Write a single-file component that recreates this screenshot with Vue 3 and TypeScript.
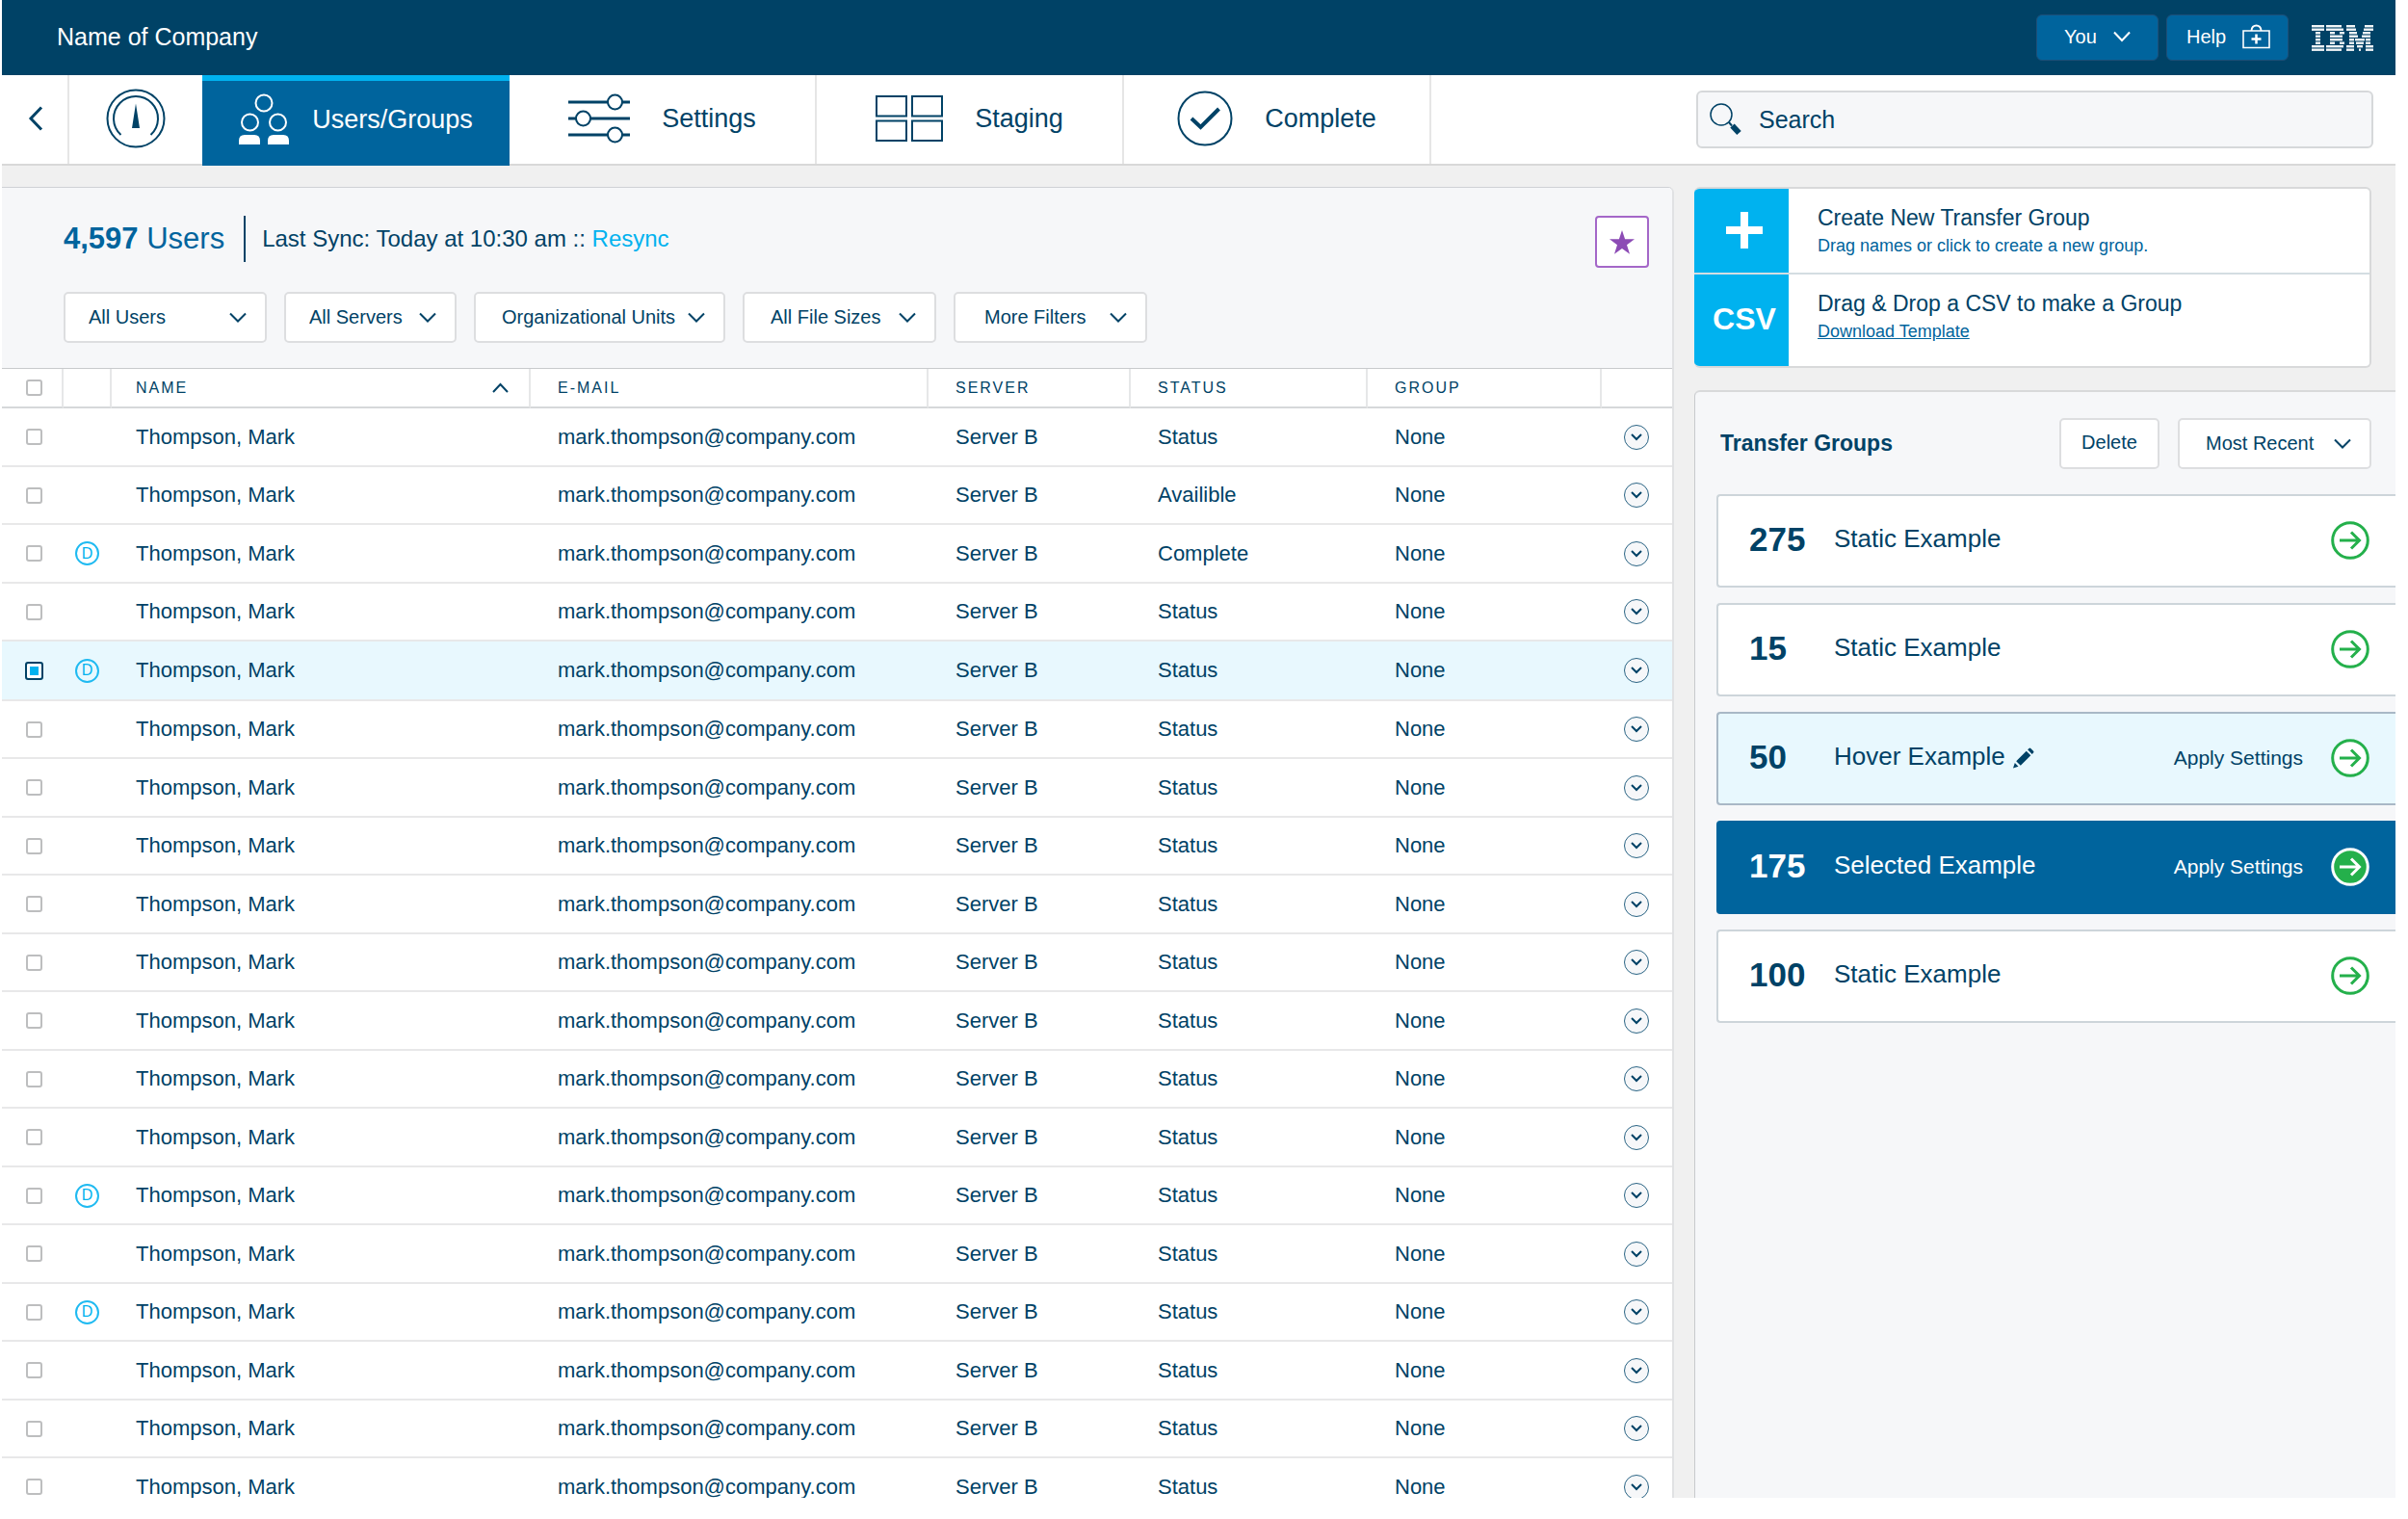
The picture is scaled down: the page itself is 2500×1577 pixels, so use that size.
<script setup lang="ts">
import { ref } from 'vue'

interface UserRow {
  id: number
  status: string
  delegate: boolean
  selected: boolean
}

interface Filter {
  label: string
  width: number
}

interface TransferGroup {
  count: number
  label: string
  state: 'static' | 'hover' | 'selected'
}

const delegates = [3, 5, 14, 16]
const statuses: Record<number, string> = { 2: 'Availible', 3: 'Complete' }

const rows = ref<UserRow[]>(
  Array.from({ length: 19 }, (_, i) => ({
    id: i + 1,
    status: statuses[i + 1] ?? 'Status',
    delegate: delegates.includes(i + 1),
    selected: i + 1 === 5,
  })),
)

const filters: Filter[] = [
  { label: 'All Users', width: 211 },
  { label: 'All Servers', width: 179 },
  { label: 'Organizational Units', width: 261 },
  { label: 'All File Sizes', width: 201 },
  { label: 'More Filters', width: 201 },
]

const groups: TransferGroup[] = [
  { count: 275, label: 'Static Example', state: 'static' },
  { count: 15, label: 'Static Example', state: 'static' },
  { count: 50, label: 'Hover Example', state: 'hover' },
  { count: 175, label: 'Selected Example', state: 'selected' },
  { count: 100, label: 'Static Example', state: 'static' },
]

const query = ref('')

/* Logo stripes: for each of the eight bars, [start, end] pairs along x. */
const logoBars: number[][][] = [
  [[0, 13], [15, 31], [36, 45], [55, 64]],
  [[0, 13], [15, 33], [36, 46], [54, 64]],
  [[4, 9], [19, 24], [29, 34], [39, 47], [53, 61]],
  [[4, 9], [19, 32], [39, 48], [52, 61]],
  [[4, 9], [19, 32], [39, 44], [45, 55], [56, 61]],
  [[4, 9], [19, 24], [29, 34], [39, 44], [46, 54], [56, 61]],
  [[0, 13], [15, 33], [36, 44], [47, 53], [56, 64]],
  [[0, 13], [15, 31], [36, 44], [49, 51], [56, 64]],
]
</script>

<template>
  <div class="app">
    <header class="topbar">
      <span class="company">Name of Company</span>
      <div class="topbar-actions">
        <button class="top-button" type="button">
          <span>You</span>
          <svg class="you-chevron" width="18" height="12" viewBox="0 0 18 12" fill="none" stroke="currentColor" stroke-width="2"><path d="M1 1.5l8 8.5 8-8.5" /></svg>
        </button>
        <button class="top-button" type="button">
          <span>Help</span>
          <svg class="help-icon" width="30" height="26" viewBox="0 0 30 26" fill="none" stroke="currentColor" stroke-width="1.6"><path d="M1 7h27v17.500H1z" /><path d="M9.500 7c0-7.500 10-7.500 10 0" stroke-width="2" /><path d="M14.500 10.500v10M9.500 15.500h10" stroke-width="2.500" /></svg>
        </button>
        <svg class="logo" width="64" height="27" viewBox="0 0 64 27" role="img" aria-label="IBM" fill="#f2f6f8">
          <g v-for="(bar, i) in logoBars" :key="i">
            <rect v-for="([from, to], j) in bar" :key="j" :x="from" :y="i * 3.5" :width="to - from" height="2.4" />
          </g>
        </svg>
      </div>
    </header>

    <div class="navbar">
      <nav class="tabs">
        <a class="tab tab-back" href="#back" aria-label="Back">
          <svg width="16" height="26" viewBox="0 0 16 26" fill="none" stroke="currentColor" stroke-width="3"><path d="M14 1.500L3 13l11 11.500" /></svg>
        </a>
        <a class="tab tab-gauge" href="#dashboard" aria-label="Dashboard">
          <svg width="62" height="62" viewBox="0 0 62 62" fill="none" stroke="currentColor" stroke-width="2"><circle cx="31" cy="31" r="29.500" /><path d="M15.500 48a23 23 0 1 1 31 0" /><path d="M31 15.500L35 41h-8z" fill="currentColor" stroke="none" /></svg>
        </a>
        <a class="tab tab-step tab-active" href="#users" aria-current="page">
          <svg width="52" height="54" viewBox="0 0 52 54" fill="none" stroke="currentColor" stroke-width="2"><circle cx="26" cy="10" r="8.500" /><circle cx="11.500" cy="30" r="8.500" /><circle cx="40.500" cy="30" r="8.500" /><path d="M0 53v-4q0-6 6-6h10q6 0 6 6v4zM30 53v-4q0-6 6-6h10q6 0 6 6v4z" fill="currentColor" stroke="none" /></svg>
          <span>Users/Groups</span>
        </a>
        <a class="tab tab-step tab-ruled" href="#settings">
          <svg width="64" height="52" viewBox="0 0 64 52" fill="none" stroke="currentColor" stroke-width="2"><g stroke-width="3"><path d="M0 9h41M56 9h8M0 26h8M23 26h41M0 43h41M56 43h8" /></g><circle cx="48.500" cy="9" r="7.500" /><circle cx="15.500" cy="26" r="7.500" /><circle cx="48.500" cy="43" r="7.500" /></svg>
          <span>Settings</span>
        </a>
        <a class="tab tab-step tab-ruled" href="#staging">
          <svg width="70" height="48" viewBox="0 0 70 48" fill="none" stroke="currentColor" stroke-width="2"><path d="M1 1h31v20.500H1zM38 1h31v20.500H38zM1 26.500h31V47H1zM38 26.500h31V47H38z" /></svg>
          <span>Staging</span>
        </a>
        <a class="tab tab-step tab-ruled" href="#complete">
          <svg width="58" height="58" viewBox="0 0 58 58" fill="none" stroke="currentColor" stroke-width="2"><circle cx="29" cy="29" r="27.500" /><path d="M15 29l9.500 9L43.500 19" stroke-width="4" /></svg>
          <span>Complete</span>
        </a>
      </nav>
      <label class="search">
        <svg width="34" height="34" viewBox="0 0 34 34" fill="none" stroke="currentColor"><circle cx="12" cy="12" r="11" stroke-width="1.500" /><path d="M20 20l3 3.500" stroke-width="2" /><path d="M23.500 23.500l7 7.500" stroke-width="6" /></svg>
        <input v-model="query" type="search" placeholder="Search" aria-label="Search">
      </label>
    </div>

    <div class="workspace">
      <main class="users">
        <div class="users-head">
          <div class="users-title">
            <h1><strong>4,597</strong> Users</h1>
            <p>Last Sync: Today at 10:30 am :: <a href="#resync">Resync</a></p>
            <button class="star" type="button" aria-label="Favorite">
              <svg width="26" height="25" viewBox="0 0 26 25" fill="currentColor"><path d="M13 0l3.100 9.300H26l-8 5.900 3 9.500-8-5.800-8 5.800 3-9.500-8-5.900h9.900z" /></svg>
            </button>
          </div>
          <div class="filters">
            <div v-for="filter in filters" :key="filter.label" class="picker" :style="{ width: filter.width + 'px' }">
              <select :aria-label="filter.label"><option>{{ filter.label }}</option></select>
              <svg width="18" height="12" viewBox="0 0 18 12" fill="none" stroke="currentColor" stroke-width="2"><path d="M1 1.500l8 8 8-8" /></svg>
            </div>
          </div>
        </div>

        <table class="grid">
          <colgroup>
            <col class="c-check"><col class="c-badge"><col><col class="c-mail"><col class="c-server"><col class="c-status"><col class="c-group"><col class="c-more">
          </colgroup>
          <thead>
            <tr>
              <th class="check"><input type="checkbox" aria-label="Select all users"></th>
              <th></th>
              <th class="name">
                <button class="sort" type="button">
                  <span>NAME</span>
                  <svg width="17" height="11" viewBox="0 0 17 11" fill="none" stroke="currentColor" stroke-width="2"><path d="M1 10l7.500-8L16 10" /></svg>
                </button>
              </th>
              <th>E-MAIL</th>
              <th>SERVER</th>
              <th>STATUS</th>
              <th>GROUP</th>
              <th></th>
            </tr>
          </thead>
          <tbody>
            <tr v-for="row in rows" :key="row.id" :class="{ picked: row.selected }">
              <td class="check"><input v-model="row.selected" type="checkbox" aria-label="Select Thompson, Mark"></td>
              <td class="badge-cell"><span v-if="row.delegate" class="badge">D</span></td>
              <td class="name">Thompson, Mark</td>
              <td>mark.thompson@company.com</td>
              <td>Server B</td>
              <td>{{ row.status }}</td>
              <td>None</td>
              <td class="more-cell">
                <button class="more" type="button" aria-label="Show details">
                  <svg width="12" height="8" viewBox="0 0 12 8" fill="none" stroke="currentColor" stroke-width="2"><path d="M1 1l5 5 5-5" /></svg>
                </button>
              </td>
            </tr>
          </tbody>
        </table>
      </main>

      <aside class="side">
        <section class="create">
          <div class="create-row">
            <button class="tile" type="button" aria-label="Create New Transfer Group">
              <svg width="38" height="38" viewBox="0 0 38 38" stroke="currentColor" stroke-width="8"><path d="M19 0v38M0 19h38" /></svg>
            </button>
            <div class="create-text">
              <h2>Create New Transfer Group</h2>
              <p>Drag names or click to create a new group.</p>
            </div>
          </div>
          <div class="create-row create-csv">
            <button class="tile" type="button">CSV</button>
            <div class="create-text">
              <h2>Drag &amp; Drop a CSV to make a Group</h2>
              <p><a href="#template">Download Template</a></p>
            </div>
          </div>
        </section>

        <section class="transfer">
          <div class="transfer-head">
            <h2>Transfer Groups</h2>
            <button class="delete" type="button">Delete</button>
            <div class="picker picker-sort">
              <select aria-label="Sort groups"><option>Most Recent</option></select>
              <svg width="18" height="12" viewBox="0 0 18 12" fill="none" stroke="currentColor" stroke-width="2"><path d="M1 1.500l8 8 8-8" /></svg>
            </div>
          </div>
          <ul class="groups">
            <li v-for="(group, i) in groups" :key="i" class="group" :class="group.state">
              <span class="count">{{ group.count }}</span>
              <span class="label">{{ group.label }}</span>
              <svg v-if="group.state === 'hover'" class="pencil" width="22" height="22" viewBox="0 0 24 24" fill="currentColor"><path d="M0 23.500l2-6 4 4zM3.500 15.500L15 4l5 5L8.500 20.500zM16.500 2.500L18 1q1-1 2 0l3 3q1 1 0 2l-1.500 1.500z" /></svg>
              <span class="spacer"></span>
              <button v-if="group.state !== 'static'" class="apply" type="button">Apply Settings</button>
              <button class="go" type="button" aria-label="Open group">
                <svg width="40" height="40" viewBox="0 0 40 40" fill="none" stroke-width="3"><circle class="ring" cx="20" cy="20" r="18.300" /><path class="arrow" d="M9 20h20M21 11.500l8.500 8.500-8.500 8.500" /></svg>
              </button>
            </li>
          </ul>
        </section>
      </aside>
    </div>
  </div>
</template>

<style>
body {
  margin: 0;
  background: #fff;
}
</style>

<style scoped>
.app,
.app * {
  box-sizing: border-box;
}

.app {
  display: flex;
  flex-direction: column;
  height: 100vh;
  padding: 0 13px 22px 2px;
  overflow: hidden;
  color: #004266;
  font-family: "Liberation Sans", Arial, Helvetica, sans-serif;
  font-size: 22px;
}

button,
select,
input {
  margin: 0;
  color: inherit;
  font: inherit;
}

button {
  padding: 0;
  border: 0;
  background: none;
  cursor: pointer;
}

h1,
h2,
p,
ul {
  margin: 0;
  padding: 0;
  font-weight: 400;
}

svg {
  display: block;
  flex: none;
}

/* Top bar */
.topbar {
  display: flex;
  flex: none;
  align-items: center;
  justify-content: space-between;
  height: 78px;
  padding: 0 23px 0 57px;
  background: #004266;
  color: #fff;
}

.company {
  padding-bottom: 3px;
  font-size: 25px;
  line-height: 32px;
}

.topbar-actions {
  display: flex;
  align-items: center;
}

.top-button {
  display: flex;
  align-items: center;
  width: 127px;
  height: 48px;
  margin-right: 8px;
  padding-bottom: 2px;
  border: 1px solid #1d4f78;
  border-radius: 6px;
  background: #00649d;
  font-size: 20px;
}

.top-button:first-child {
  padding-left: 28px;
}

.top-button:nth-child(2) {
  padding-left: 20px;
}

.you-chevron {
  margin-left: 17px;
}

.help-icon {
  margin-left: 17px;
}

.logo {
  margin-left: 16px;
}

/* Step navigation */
.navbar {
  display: flex;
  flex: none;
  align-items: center;
  justify-content: space-between;
  height: 94px;
  padding-right: 23px;
  border-bottom: 2px solid #d8d8d8;
}

.tabs {
  display: flex;
  align-self: stretch;
}

.tab {
  display: flex;
  align-items: center;
  justify-content: center;
  padding-bottom: 2px;
  color: inherit;
  font-size: 27px;
  text-decoration: none;
}

.tab-back {
  width: 70px;
  padding-left: 2px;
  border-right: 2px solid #e6e6e6;
}

.tab-gauge {
  width: 138px;
}

.tab-step {
  gap: 33px;
  width: 319px;
}

.tab-ruled {
  border-right: 2px solid #e6e6e6;
}

.tab-active {
  gap: 24px;
  margin-bottom: -2px;
  padding-bottom: 8px;
  border-top: 6px solid #00b2ef;
  background: #00649d;
  color: #fff;
}

.search {
  display: flex;
  align-items: center;
  gap: 17px;
  width: 703px;
  height: 60px;
  padding-left: 12px;
  border: 2px solid #d6d8da;
  border-radius: 6px;
  background: #f6f7f9;
}

.search input {
  flex: 1;
  min-width: 0;
  padding: 0;
  border: 0;
  outline: 0;
  background: none;
  font-size: 25px;
  appearance: none;
}

.search input::placeholder {
  color: #004266;
  opacity: 1;
}

/* Work area */
.workspace {
  display: grid;
  flex: 1;
  grid-template-columns: minmax(0, 1fr) 728px;
  gap: 21px;
  min-height: 0;
  padding-top: 22px;
  background: #f0f0f0;
}

.users {
  overflow: hidden;
  border-top: 1px solid #cfd1d5;
  border-right: 2px solid #e0e1e3;
  border-top-right-radius: 6px;
  background: #fff;
}

.users-head {
  padding: 29px 24px 26px 64px;
  border-bottom: 1px solid #c8cacd;
  background: #f6f7f9;
}

.users-title {
  display: flex;
  align-items: flex-start;
  height: 54px;
}

.users-title h1 {
  padding-right: 20px;
  border-right: 2px solid #004266;
  color: #00649d;
  font-size: 31px;
  line-height: 48px;
}

.users-title p {
  padding-left: 17px;
  font-size: 24px;
  line-height: 48px;
}

.users-title a {
  color: #00b2ef;
  text-decoration: none;
}

.star {
  display: flex;
  align-items: center;
  justify-content: center;
  width: 56px;
  height: 54px;
  margin-left: auto;
  border: 2px solid #a467c8;
  border-radius: 4px;
  background: #fff;
  color: #8c4bb5;
}

.filters {
  display: flex;
  gap: 18px;
  margin-top: 25px;
}

.picker {
  position: relative;
  height: 53px;
}

.picker select {
  width: 100%;
  height: 100%;
  padding: 0 40px 2px 27px;
  border: 2px solid #dddee0;
  border-radius: 5px;
  background: #fff;
  font-size: 20px;
  appearance: none;
}

.picker:nth-child(-n+2) select {
  padding-left: 24px;
}

.picker:nth-child(5) select {
  padding-left: 30px;
}

.picker svg {
  position: absolute;
  top: 21px;
  right: 21px;
  pointer-events: none;
}

/* User table */
.grid {
  width: 100%;
  border-spacing: 0;
  table-layout: fixed;
}

.c-check { width: 64px; }
.c-badge { width: 50px; }
.c-mail { width: 413px; }
.c-server { width: 210px; }
.c-status { width: 246px; }
.c-group { width: 243px; }
.c-more { width: 73px; }

th {
  height: 41px;
  padding: 0 0 0 28px;
  border-right: 2px solid #e6e7e8;
  border-bottom: 2px solid #d6d8da;
  font-size: 16px;
  font-weight: 400;
  letter-spacing: 2px;
  text-align: left;
}

th:last-child {
  border-right: 0;
}

td {
  height: 61px;
  padding: 0 0 0 28px;
  border-bottom: 2px solid #e8e8e9;
  line-height: 28px;
}

tr:nth-child(even) td {
  height: 60px;
}

tr.picked td {
  height: 62px;
  background: #e8f8fe;
}

th.name,
td.name {
  padding-left: 25px;
}

.sort {
  display: flex;
  align-items: center;
  justify-content: space-between;
  width: 100%;
  padding-right: 21px;
  letter-spacing: inherit;
}

th.check,
td.check {
  padding: 0 0 0 25px;
}

.check input {
  display: block;
  width: 17px;
  height: 17px;
  border: 2px solid #bdbebf;
  border-radius: 3px;
  background: #fff;
  appearance: none;
}

.check input:checked {
  width: 19px;
  height: 19px;
  margin-left: -1px;
  border-color: #004266;
  background: #00b2ef;
  box-shadow: inset 0 0 0 3px #fff;
}

td.badge-cell,
td.more-cell {
  padding: 0 1px 0 0;
}

.badge {
  display: flex;
  align-items: center;
  justify-content: center;
  width: 25px;
  height: 25px;
  margin: 0 auto;
  border: 2px solid #1fbaf1;
  border-radius: 50%;
  color: #00b2ef;
  font-size: 16px;
  line-height: 16px;
}

.more {
  display: flex;
  align-items: center;
  justify-content: center;
  width: 26px;
  height: 26px;
  margin: 0 auto;
  border: 1px solid #2a6484;
  border-radius: 50%;
  background: #f6f7f9;
}

/* Right column */
.side {
  display: flex;
  flex-direction: column;
  min-height: 0;
}

.create {
  flex: none;
  margin-right: 25px;
  overflow: hidden;
  border: 2px solid #d8d9da;
  border-left: 0;
  border-radius: 6px;
  background: #fff;
}

.create-row {
  display: flex;
  height: 87px;
}

.create-csv {
  height: 97px;
  border-top: 2px solid #d4dde2;
}

.tile {
  display: flex;
  align-items: center;
  justify-content: center;
  width: 98px;
  padding: 0 0 2px 6px;
  background: #00b2ef;
  color: #fff;
  font-size: 32px;
  font-weight: 700;
}

.create-text {
  padding: 15px 0 0 30px;
}

.create-text h2 {
  font-size: 23px;
  line-height: 30px;
}

.create-text p {
  color: #00649d;
  font-size: 18px;
  line-height: 28px;
}

.create-text a {
  color: inherit;
}

.transfer {
  flex: 1;
  margin-top: 23px;
  padding: 27px 0 0 22px;
  border-top: 2px solid #d8d9da;
  border-left: 1px solid #c8cacd;
  border-top-left-radius: 6px;
  background: #f6f7f9;
}

.transfer-head {
  display: flex;
  align-items: center;
  gap: 19px;
  padding-right: 25px;
}

.transfer-head h2 {
  flex: 1;
  padding-left: 4px;
  font-size: 23px;
  font-weight: 700;
}

.delete {
  width: 104px;
  height: 53px;
  padding-bottom: 3px;
  border: 2px solid #dddee0;
  border-radius: 5px;
  background: #fff;
  font-size: 20px;
}

.picker-sort {
  width: 201px;
}

.groups {
  display: flex;
  flex-direction: column;
  gap: 16px;
  margin-top: 26px;
  list-style: none;
}

.group {
  display: flex;
  align-items: center;
  height: 97px;
  padding: 0 27px 2px 32px;
  border: 2px solid #cdd5da;
  border-right: 0;
  border-radius: 4px 0 0 4px;
  background: #fff;
}

.group.hover {
  border-color: #a9b8c6;
  background: #e8f8fe;
}

.group.selected {
  border-color: #00649d;
  background: #00649d;
  color: #fff;
}

.count {
  width: 88px;
  padding-bottom: 2px;
  font-size: 35px;
  font-weight: 700;
}

.label {
  padding-bottom: 2px;
  font-size: 26px;
}

.pencil {
  margin-left: 8px;
}

.spacer {
  flex: 1;
}

.apply {
  margin-right: 29px;
  font-size: 21px;
}

.ring {
  fill: #fff;
  stroke: #24b04b;
}

.arrow {
  stroke: #24b04b;
}

.selected .ring {
  fill: #24b04b;
  stroke: #fff;
}

.selected .arrow {
  stroke: #fff;
}
</style>
